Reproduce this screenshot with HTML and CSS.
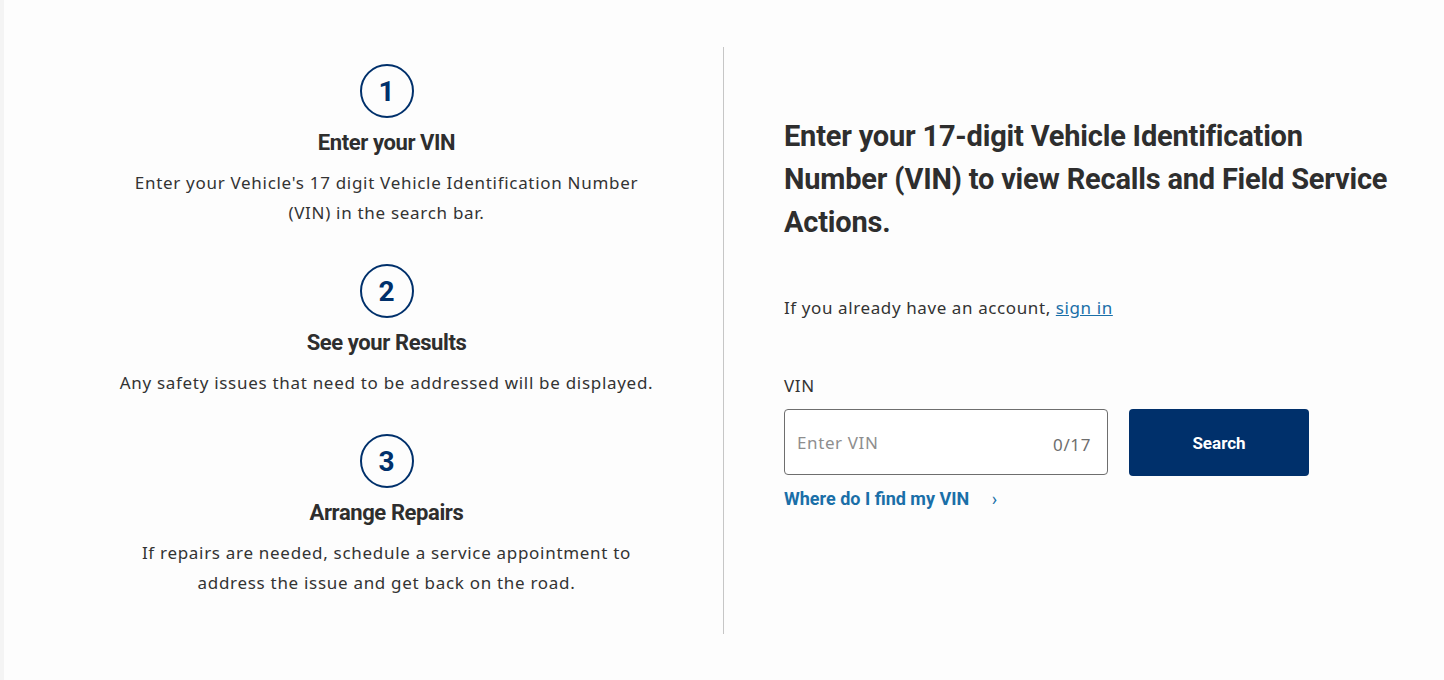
FILE: index.html
```html
<!DOCTYPE html>
<html lang="en">
<head>
  <meta charset="UTF-8">
  <meta name="viewport" content="width=device-width, initial-scale=1.0">
  <title>Recalls and Field Service Actions</title>
  <link rel="stylesheet" href="styles.css">
</head>
<body>
<main class="recall-lookup">
  <section class="steps">
    <div class="step">
      <div class="step-number">1</div>
      <h3>Enter your VIN</h3>
      <p>Enter your Vehicle's 17 digit Vehicle Identification Number (VIN) in the search bar.</p>
    </div>
    <div class="step">
      <div class="step-number">2</div>
      <h3>See your Results</h3>
      <p>Any safety issues that need to be addressed will be displayed.</p>
    </div>
    <div class="step">
      <div class="step-number">3</div>
      <h3>Arrange Repairs</h3>
      <p>If repairs are needed, schedule a service appointment to address the issue and get back on the road.</p>
    </div>
  </section>

  <section class="vin-search">
    <h1>Enter your 17-digit Vehicle Identification Number (VIN) to view Recalls and Field Service Actions.</h1>
    <p class="sign-in">If you already have an account, <a href="#signin">sign in</a></p>

    <label for="vinInput">VIN</label>
    <div class="search-row">
      <div class="vin-field">
        <input id="vinInput" type="text" maxlength="17" placeholder="Enter VIN">
        <span class="counter">0/17</span>
      </div>
      <button type="button">Search</button>
    </div>
    <a class="find-vin" href="#find-vin">Where do I find my VIN <span class="chevron">&#8250;</span></a>
  </section>
</main>
</body>
</html>
```

FILE: styles.css
```css
* {
    margin: 0;
    padding: 0;
    box-sizing: border-box;
}

body {
    background-color: #fdfdfd;
    border-left: 4px solid #f4f4f4;
    min-height: 680px;
    color: #333333;
    font-family: 'Noto Sans', 'Open Sans', sans-serif;
}

.recall-lookup {
    display: flex;
    padding: 47px 0 0 46px;
}

.steps {
    width: 674px;
    border-right: 1px solid #c6c6c6;
    padding: 17px 0 36px;
}

.step {
    display: flex;
    flex-direction: column;
    align-items: center;
    text-align: center;
    margin-bottom: 36px;
}

.step:last-child {
    margin-bottom: 0;
}

.step-number {
    width: 54px;
    height: 54px;
    border: 2px solid #00306b;
    border-radius: 50%;
    display: flex;
    align-items: center;
    justify-content: center;
    color: #00306b;
    font-family: Roboto, sans-serif;
    font-size: 28px;
    font-weight: 700;
}

.step h3 {
    margin-top: 10px;
    font-family: Roboto, sans-serif;
    font-size: 22px;
    line-height: 30px;
    font-weight: 700;
    letter-spacing: -0.4px;
    color: #2e2e2e;
}

.step p {
    margin-top: 10px;
    max-width: 548px;
    font-size: 17px;
    line-height: 30px;
    letter-spacing: 0.7px;
}

.vin-search {
    width: 680px;
    padding: 68px 0 0 60px;
}

.vin-search h1 {
    max-width: 614px;
    font-family: Roboto, sans-serif;
    font-size: 29px;
    line-height: 43px;
    font-weight: 700;
    letter-spacing: -0.2px;
    color: #2e2e2e;
}

.sign-in {
    margin-top: 49px;
    font-size: 17px;
    line-height: 30px;
    letter-spacing: 0.6px;
}

.sign-in a {
    color: #1a6fa8;
}

label {
    display: block;
    margin-top: 53px;
    font-size: 17px;
    line-height: 20px;
    letter-spacing: 0.6px;
}

.search-row {
    display: flex;
    gap: 21px;
    margin-top: 13px;
}

.vin-field {
    position: relative;
    width: 324px;
    height: 66px;
}

.vin-field input {
    width: 100%;
    height: 100%;
    border: 1px solid #6e6e6e;
    border-radius: 4px;
    padding: 0 70px 0 12px;
    background: #ffffff;
    font-family: inherit;
    font-size: 17px;
    letter-spacing: 0.6px;
    color: #333333;
    outline: none;
}

.vin-field input::placeholder {
    color: #8e8e8e;
}

.vin-field .counter {
    position: absolute;
    right: 17px;
    top: 24px;
    font-size: 17px;
    letter-spacing: 0.6px;
    color: #6e6e6e;
}

.search-row button {
    width: 180px;
    height: 67px;
    background-color: #00306b;
    color: #ffffff;
    border: none;
    border-radius: 4px;
    font-family: Roboto, sans-serif;
    font-size: 17px;
    font-weight: 700;
    cursor: pointer;
}

.find-vin {
    display: inline-block;
    margin-top: 12px;
    color: #1a6fa8;
    font-family: Roboto, sans-serif;
    font-size: 18px;
    font-weight: 700;
    letter-spacing: 0;
    text-decoration: none;
}

.find-vin .chevron {
    margin-left: 18px;
    font-weight: 400;
}
```
